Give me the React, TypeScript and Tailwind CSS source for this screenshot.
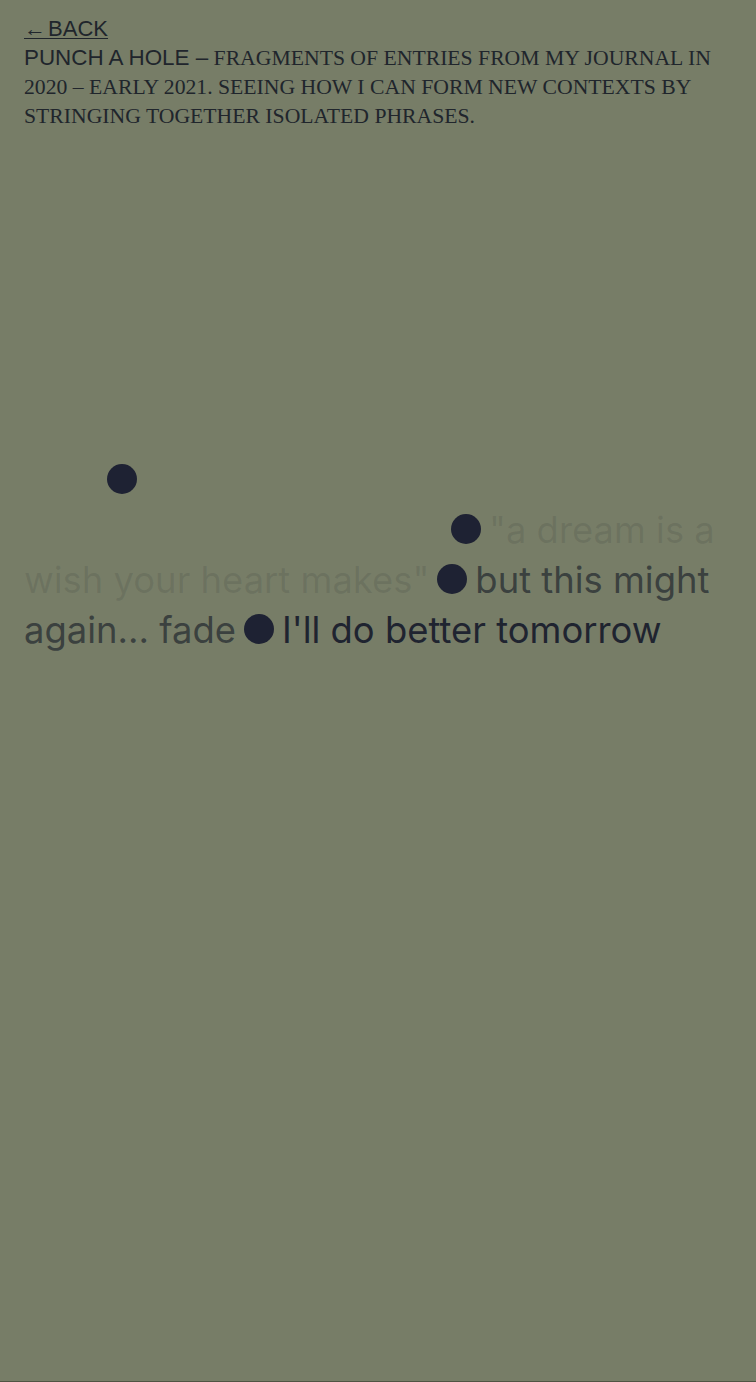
import React from 'react';

type Piece = { text: string; tone: 'faint' | 'mid' | 'dark' };

// fragments that follow the blank dots, in reading order
const pieces: Piece[] = [
    { text: '"a dream is a wish your heart makes"', tone: 'faint' },
    { text: 'but this might again... fade', tone: 'mid' },
    { text: "I'll do better tomorrow", tone: 'dark' },
];

const toneClass: Record<Piece['tone'], string> = {
    faint: 'text-[#20262e]/[0.12]',
    mid: 'text-[#20262e]/70',
    dark: 'text-[#1f2430]',
};

function Dot() {
    return <span className="inline-block w-[30px] h-[30px] mx-2 rounded-full bg-[#1e2233] align-middle -translate-y-[4px]" />;
}

export default function App() {
    return (
        <div className="h-[1382px] w-full bg-[#777d67] border-b border-[#4f5443] px-6 pt-[14px]">
            <a href="#" className="inline-block text-[22px] leading-[29px] underline underline-offset-2 decoration-1 text-[#20252c] [word-spacing:-4px] font-['Liberation_Sans',Arial,sans-serif]">
                ← BACK
            </a>
            <p className="text-[21.7px] leading-[29px] text-[#20252c] font-['Liberation_Serif','Times_New_Roman',serif]">
                <span className="text-[22.4px] font-['Liberation_Sans',Arial,sans-serif]">PUNCH A HOLE –</span> FRAGMENTS OF ENTRIES FROM MY JOURNAL IN 2020 – EARLY 2021. SEEING HOW I CAN FORM NEW CONTEXTS BY STRINGING TOGETHER ISOLATED PHRASES.
            </p>

            <p className="mt-[324px] text-[36.4px] leading-[50px] font-['Inter',sans-serif]">
                <span className="inline-block w-[75px]" />
                <Dot />
                <br />
                <span className="inline-block w-[419px]" />
                {pieces.map((p, i) => (
                    <React.Fragment key={i}>
                        <Dot />
                        <span className={toneClass[p.tone]}>{p.text}</span>
                    </React.Fragment>
                ))}
            </p>
        </div>
    );
}
